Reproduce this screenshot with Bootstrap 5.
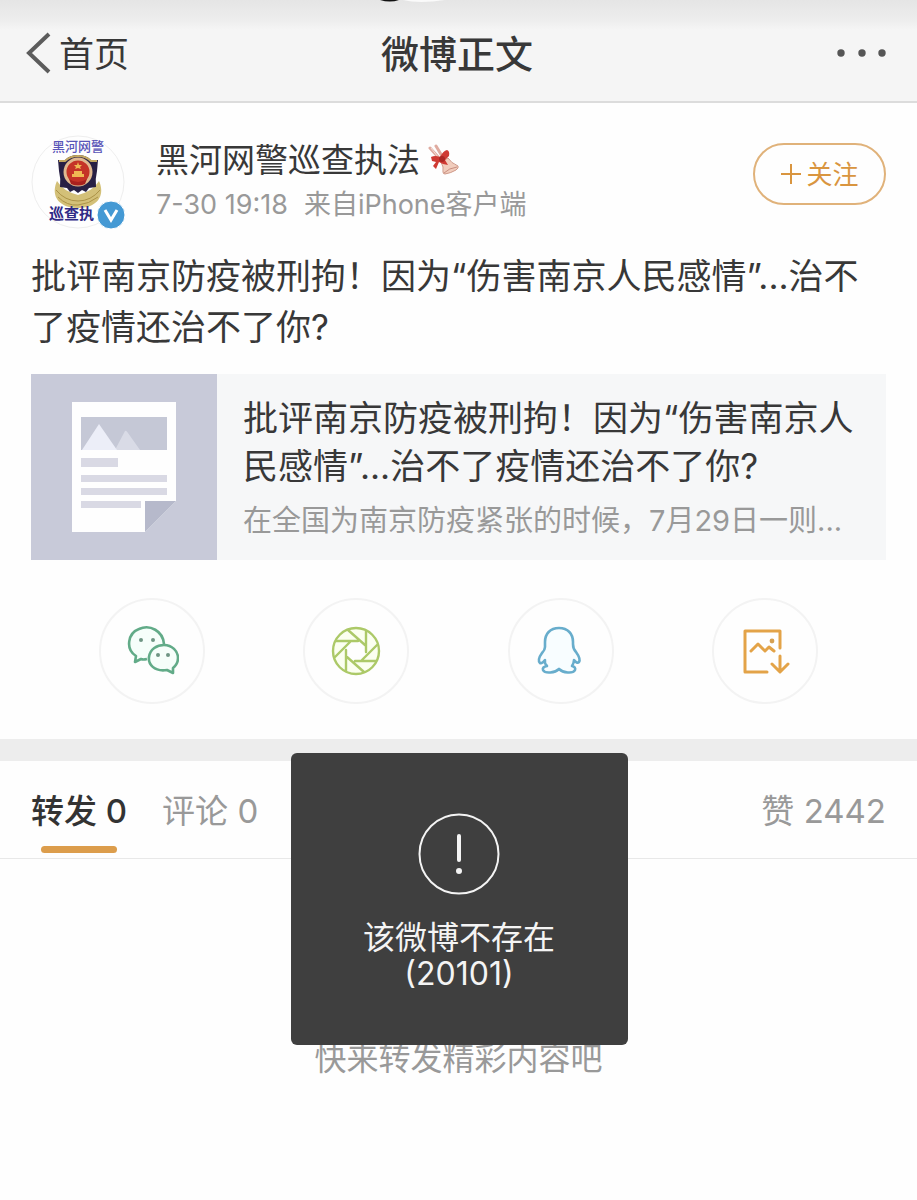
<!DOCTYPE html>
<html lang="zh-CN">
<head>
<meta charset="utf-8">
<meta name="viewport" content="width=device-width, initial-scale=1">
<title>微博正文</title>
<link href="https://cdn.jsdelivr.net/npm/bootstrap@5.3.0/dist/css/bootstrap.min.css" rel="stylesheet">
<style>
  body { font-family: Inter, "Noto Sans CJK SC", sans-serif; color: #383838; background: #fefefe; }
  a { color: inherit; text-decoration: none; }
  svg { display: block; }
  .topbar { height: 103px; padding: 6px 28px 0; background: linear-gradient(#e5e5e5, #ededed 20px, #f5f5f5 30px); border-bottom: 2px solid #dcdcdc; }
  .topbar > * { flex: 1 1 0; }
  .back-link { font-size: 35px; line-height: 48px; gap: 8px; margin-left: -3px; }
  .page-title { font-size: 38px; line-height: 48px; font-weight: 500; }
  .notch { top: 0; left: 50%; margin-left: -80px; }
  .more-btn { height: 40px; }
  .post { padding: 32px 31px 0; }
  .avatar { width: 94px; height: 94px; margin-right: 31px; }
  .author { font-size: 33px; line-height: 50px; gap: 8px; }
  .meta-line { font-size: 27px; line-height: 40px; color: #999; gap: 16px; }
  .follow-btn { height: 62px; width: 133px; margin-top: 8px; border: 2px solid #e0b27a; border-radius: 31px; color: #d9953f; background: transparent; font-size: 26px; line-height: 32px; gap: 4px; }
  .follow-btn span { padding-top: 2px; }
  .post-text { font-size: 35px; line-height: 51px; margin: 22px 0 21px; }
  .link-card { background: #f6f7f8; }
  .thumb { width: 186px; height: 186px; }
  .link-body { padding: 20px 24px 0 26px; }
  .link-title { font-size: 35px; line-height: 48px; }
  .link-desc { font-size: 29px; line-height: 40px; color: #999; margin-top: 11px; }
  .share-row { padding: 38px 50px 35px; }
  .share-btn { width: 106px; height: 106px; border: 2px solid #f3f3f3; border-radius: 50%; background: #fefefe; padding: 0; }
  .feedback { border-top: 22px solid #ededed; }
  .tabs { height: 98px; padding: 0 31px; border-bottom: 1px solid #e8e8e8; gap: 35px; font-size: 33px; color: #999; }
  .tabs a { height: 97px; padding-top: 26px; line-height: 48px; }
  .tabs a.current { color: #333; font-weight: 500; }
  .tabs a.current::after { content: ""; display: block; width: 76px; height: 7px; margin: 11px auto 0; border-radius: 4px; background: #dc9d4c; }
  .empty-hint { padding: 176px 0 100px; font-size: 32px; line-height: 48px; color: #999; }
  .notice { top: -8px; left: 50%; width: 337px; height: 292px; margin-left: -168px; padding-top: 60px; background: #3f3f3f; color: #f4f4f4; border-radius: 6px; font-size: 32px; line-height: 36px; }
  .notice svg { margin: 0 auto 25px; }
</style>
</head>
<body>
<header class="topbar d-flex align-items-center position-relative">
  <svg class="notch position-absolute" width="70" height="4" viewBox="0 0 70 4" aria-hidden="true"><path d="M1 0H20Q11 3 1 0Z" fill="#111"/><path d="M24 0H66Q40 4 24 0Z" fill="#fafafa"/></svg>
  <a href="#" class="back-link d-flex align-items-center">
    <svg width="26" height="44" viewBox="0 0 26 44" fill="none" stroke="#5c5c5c" stroke-width="4"><path d="M24 2L4 21L24 40"/></svg>
    <span>首页</span>
  </a>
  <h1 class="page-title m-0 text-center">微博正文</h1>
  <div class="d-flex justify-content-end">
    <button type="button" class="more-btn btn p-0 border-0" aria-label="更多">
      <svg width="54" height="10" viewBox="0 0 54 10" fill="#555"><circle cx="6" cy="4" r="3.7"/><circle cx="27" cy="4" r="3.7"/><circle cx="47" cy="4" r="3.7"/></svg>
    </button>
  </div>
</header>

<main>
  <article class="post">
    <div class="d-flex align-items-start">
      <svg class="avatar flex-shrink-0" viewBox="0 0 94 94" aria-label="黑河网警巡查执法">
        <circle cx="47" cy="47" r="46" fill="#fefefe" stroke="#eee" stroke-width="1"/>
        <text x="47" y="16" text-anchor="middle" font-family="Noto Sans CJK SC, sans-serif" font-size="13" font-weight="500" fill="#5a55b8">黑河网警</text>
        <path d="M26 46C21 57 24 68 38 72Q47 74 56 72C70 68 73 57 68 46Q62 56 47 60Q32 56 26 46Z" fill="#d3c078"/>
        <path d="M25 55Q34 66 47 66T69 55M27 62Q36 71 47 70T67 62" fill="none" stroke="#ac9347" stroke-width="1"/>
        <path d="M47 20Q55 20 60 25L67 25L66 36Q64 44 65 52L58 53L55 57L51 55L47 58L43 55L39 57L36 53L29 52Q30 44 28 36L27 25L34 25Q39 20 47 20Z" fill="#282044"/>
        <path d="M28 26H34Q39 21 47 21T60 26H66" fill="none" stroke="#c2a760" stroke-width="2"/>
        <circle cx="47" cy="37" r="13" fill="#c53327" stroke="#e0b990" stroke-width="3"/>
        <path d="M47 27L48 30H51L49 32L50 34L47 33L44 34L45 32L43 30H46ZM41 39H43V36H51V39H53V42H41Z" fill="#f0b953"/>
        <path d="M38 44Q47 50 56 44L54 49Q47 52 40 49Z" fill="#a8211e"/>
        <text x="18" y="84" font-family="Noto Sans CJK SC, sans-serif" font-weight="700" font-size="15" fill="#302a86">巡查执</text>
        <circle cx="80" cy="80" r="14" fill="#4499d4" stroke="#fff" stroke-width="1"/>
        <path d="M74 75L80 85L86 75" fill="none" stroke="#fff" stroke-width="3"/>
      </svg>
      <div class="flex-grow-1">
        <div class="author d-flex align-items-center">
          <a href="#">黑河网警巡查执法</a>
          <svg width="32" height="34" viewBox="0 0 32 34" aria-hidden="true">
            <path d="M2 5L11 15M8 3L14 13" stroke="#dfaba0" stroke-width="3" stroke-linecap="round"/>
            <path d="M3 5L10 14" stroke="#f7ddd5" stroke-width="1"/>
            <path d="M13 19L20 15Q23 20 30 23Q31 25 28 27Q23 30 17 31Q15 31 15 29Q16 24 13 19Z" fill="#f1cdbd" stroke="#cf9989" stroke-width="1"/>
            <path d="M16 30Q21 25 29 24" fill="none" stroke="#c98f80" stroke-width="1"/>
            <path d="M3 14Q7 12 12 14Q15 8 19 7Q22 8 21 13L17 17L20 22L15 21L11 19L8 26L5 23L8 19L4 18Z" fill="#cf3a33"/>
            <circle cx="14" cy="16" r="3" fill="#ac2724"/>
          </svg>
        </div>
        <div class="meta-line d-flex"><span>7-30 19:18</span><span>来自iPhone客户端</span></div>
      </div>
      <button type="button" class="follow-btn btn p-0 d-flex align-items-center justify-content-center flex-shrink-0">
        <svg width="22" height="22" viewBox="0 0 22 22" stroke="#d9953f" stroke-width="2"><path d="M11 1V21M1 11H21"/></svg>
        <span>关注</span>
      </button>
    </div>

    <p class="post-text">批评南京防疫被刑拘！因为“伤害南京人民感情”...治不了疫情还治不了你?</p>

    <a href="#" class="link-card d-flex">
      <svg class="thumb flex-shrink-0" viewBox="0 0 186 186" aria-hidden="true">
        <path d="M0 0H186V186H0Z" fill="#c8cad9"/>
        <path d="M41 28H145V127L114 158H41Z" fill="#fefefe"/>
        <path d="M114 127H145L114 158Z" fill="#b6b9cb"/>
        <path d="M50 43H136V76H50Z" fill="#c5c8d6"/>
        <path d="M84 76L94 57Q95 56 97 59L109 76Z" fill="#d9dbe6"/>
        <path d="M51 76L68 50L86 76Z" fill="#eceef8"/>
        <path d="M50 84H87V93H50ZM50 101H136V108H50ZM50 114H136V121H50ZM50 127H110V134H50Z" fill="#d9d9e4"/>
      </svg>
      <div class="link-body flex-grow-1">
        <div class="link-title">批评南京防疫被刑拘！因为“伤害南京人民感情”...治不了疫情还治不了你?</div>
        <div class="link-desc">在全国为南京防疫紧张的时候，7月29日一则...</div>
      </div>
    </a>
  </article>

  <div class="share-row">
    <div class="row g-0">
      <div class="col-3 d-flex justify-content-center">
        <button type="button" class="share-btn btn d-flex align-items-center justify-content-center" aria-label="微信">
          <svg width="54" height="54" viewBox="-2 0 54 54" fill="none" stroke="#62ab88" stroke-width="2.6" stroke-linejoin="round">
            <path d="M20 35Q16 36 14 35L8 38L9 32C-2 25 1 9 12 5C23 0 36 7 37 20" fill="#f6fefa"/>
            <path d="M46 44V49L40 46C27 48 21 40 22 33C23 25 30 21 37 21C45 21 51 27 51 34Q51 40 46 44Z" fill="#f6fefa"/>
            <g fill="#6f9583" stroke="none"><circle cx="14" cy="16" r="2"/><circle cx="26" cy="16" r="2"/><circle cx="31" cy="31" r="2"/><circle cx="41" cy="31" r="2"/></g>
          </svg>
        </button>
      </div>
      <div class="col-3 d-flex justify-content-center">
        <button type="button" class="share-btn btn d-flex align-items-center justify-content-center" aria-label="朋友圈">
          <svg width="54" height="54" viewBox="0 0 54 54" fill="none" stroke="#acc968" stroke-width="2.4" stroke-linecap="round">
            <circle cx="27" cy="27" r="23" fill="#fbfff0"/>
            <path d="M23 18H31L36 23V31L31 36H23L18 31V23Z" fill="#fefefe" stroke="none"/>
            <path d="M19 6L36 21M37 7V28M48 21L33 36M47 37H26M35 48L18 33M17 47V26M6 33L21 18M7 17H29"/>
          </svg>
        </button>
      </div>
      <div class="col-3 d-flex justify-content-center">
        <button type="button" class="share-btn btn d-flex align-items-center justify-content-center" aria-label="QQ">
          <svg width="54" height="54" viewBox="1 0 54 54" fill="none" stroke="#68adcc" stroke-width="2.6" stroke-linejoin="round" stroke-linecap="round">
            <path fill="#f8fdff" d="M26 4C17 4 12 10 12 18V23Q12 26 9 29Q4 36 7 39Q9 40 12 36Q11 39 14 42Q9 43 10 46C12 50 22 49 26 45C30 49 40 50 42 46Q43 43 39 42Q41 39 41 36Q44 40 46 38Q48 35 43 28Q40 25 40 20V18C40 10 35 4 26 4Z"/>
          </svg>
        </button>
      </div>
      <div class="col-3 d-flex justify-content-center">
        <button type="button" class="share-btn btn d-flex align-items-center justify-content-center" aria-label="保存图片">
          <svg width="54" height="54" viewBox="0 0 54 54" fill="none" stroke="#e3a348" stroke-width="3" stroke-linecap="round" stroke-linejoin="round">
            <path d="M42 24V7H7V48H29M42 32V47M34 40L42 48L50 40M13 27L20 20L27 27L31 23L36 27"/>
            <circle cx="34" cy="17" r="2.4" fill="#d5a052" stroke="none"/>
          </svg>
        </button>
      </div>
    </div>
  </div>

  <section class="feedback position-relative">
    <nav class="tabs d-flex" aria-label="互动">
      <a href="#" class="current" aria-current="page">转发 0</a>
      <a href="#">评论 0</a>
      <a href="#" class="ms-auto">赞 2442</a>
    </nav>
    <p class="empty-hint m-0 text-center">快来转发精彩内容吧</p>
    <div class="notice position-absolute text-center" role="alert">
      <svg width="82" height="82" viewBox="0 0 82 82" fill="none" stroke="#f4f4f4" aria-hidden="true"><circle cx="41" cy="41" r="39.5" stroke-width="2"/><path d="M41 23V47" stroke-width="4" stroke-linecap="round"/><circle cx="41" cy="58" r="3" fill="#f4f4f4" stroke="none"/></svg>
      <div>该微博不存在</div>
      <div>(20101)</div>
    </div>
  </section>
</main>
<script src="https://cdn.jsdelivr.net/npm/bootstrap@5.3.0/dist/js/bootstrap.bundle.min.js"></script>
</body>
</html>
